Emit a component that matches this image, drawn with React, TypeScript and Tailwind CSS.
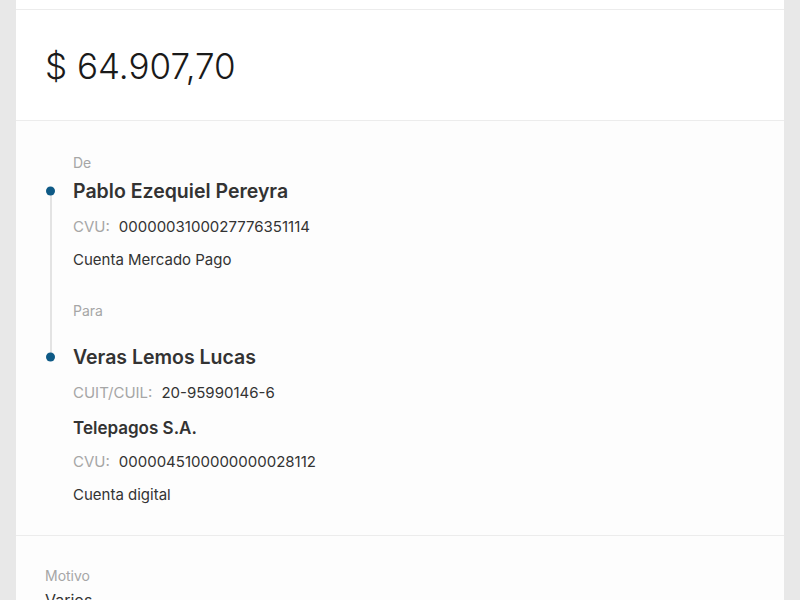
const font = { fontFamily: "Inter, 'Open Sans', sans-serif" }

const Label = ({ children, className = "" }: { children: React.ReactNode; className?: string }) => (
  <div className={`text-[14px] leading-[16px] text-[#a6a6a6] ${className}`}>{children}</div>
)

const Field = ({ label, value, className = "" }: { label: string; value: string; className?: string }) => (
  <div className={`flex items-center text-[15px] leading-[20px] ${className}`}>
    <span className="text-[#a6a6a6] mr-[9px]">{label}</span>
    <span className="text-[#333333]">{value}</span>
  </div>
)

const Dot = () => (
  <span className="absolute left-[-27px] top-1/2 -translate-y-1/2 w-[9px] h-[9px] rounded-full bg-[#0e5a86]" />
)

export default function App() {
  return (
    <div className="min-h-screen bg-[#e8e8e8] flex justify-center" style={font}>
      <div className="w-[768px] bg-white h-[600px] overflow-hidden">
        <div className="h-[10px] border-b border-[#ececec]" />

        <div className="h-[111px] flex items-center pl-[29px] border-b border-[#ececec]">
          <span className="text-[35px] leading-[40px] font-light text-[#1a1a1a] pt-[2px]">$ 64.907,70</span>
        </div>

        <div className="bg-[#fdfdfd] border-b border-[#ececec] pt-[34px] pb-[30px] pl-[57px]">
          <div className="relative">
            <div className="absolute left-[-23.5px] top-[35px] h-[166px] w-[2px] bg-[#e3e3e3]" />

            <Label>De</Label>
            <div className="relative mt-[8px] text-[19.5px] leading-[24px] font-semibold text-[#333333]">
              <Dot />
              Pablo Ezequiel Pereyra
            </div>
            <Field className="mt-[14px]" label="CVU:" value="0000003100027776351114" />
            <div className="mt-[13px] text-[15px] leading-[20px] text-[#333333]">Cuenta Mercado Pago</div>

            <Label className="mt-[33px]">Para</Label>
            <div className="relative mt-[26px] text-[19.5px] leading-[24px] font-semibold text-[#333333]">
              <Dot />
              Veras Lemos Lucas
            </div>
            <Field className="mt-[14px]" label="CUIT/CUIL:" value="20-95990146-6" />
            <div className="mt-[14px] text-[17px] leading-[22px] font-semibold text-[#333333]">Telepagos S.A.</div>
            <Field className="mt-[13px]" label="CVU:" value="0000045100000000028112" />
            <div className="mt-[13px] text-[15px] leading-[20px] text-[#333333]">Cuenta digital</div>
          </div>
        </div>

        <div className="bg-[#fdfdfd] pt-[32px] pl-[29px] h-[100px]">
          <Label>Motivo</Label>
          <div className="mt-[6px] text-[16px] leading-[20px] text-[#333333]">Varios</div>
        </div>
      </div>
    </div>
  )
}
